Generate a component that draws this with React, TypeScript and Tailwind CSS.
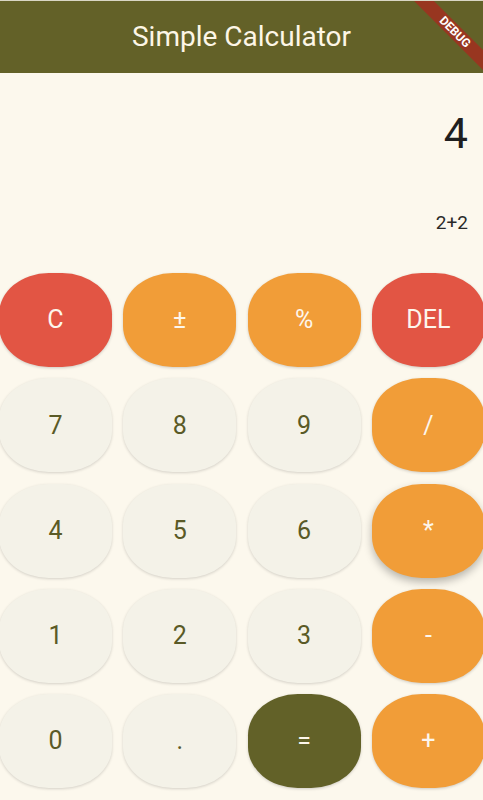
import React from "react";

type Btn = { label: string; kind: "red" | "orange" | "light" | "green"; raised?: boolean };

const rows: Btn[][] = [
  [
    { label: "C", kind: "red" },
    { label: "±", kind: "orange" },
    { label: "%", kind: "orange" },
    { label: "DEL", kind: "red" },
  ],
  [
    { label: "7", kind: "light" },
    { label: "8", kind: "light" },
    { label: "9", kind: "light" },
    { label: "/", kind: "orange" },
  ],
  [
    { label: "4", kind: "light" },
    { label: "5", kind: "light" },
    { label: "6", kind: "light" },
    { label: "*", kind: "orange", raised: true },
  ],
  [
    { label: "1", kind: "light" },
    { label: "2", kind: "light" },
    { label: "3", kind: "light" },
    { label: "-", kind: "orange" },
  ],
  [
    { label: "0", kind: "light" },
    { label: ".", kind: "light" },
    { label: "=", kind: "green" },
    { label: "+", kind: "orange" },
  ],
];

function cls(b: Btn) {
  const base =
    "h-[94px] w-[113px] shrink-0 rounded-[44%] flex items-center justify-center text-[25px] ";
  let c = "";
  if (b.kind === "red") c = "bg-[#e25544] text-[#fdf6ec] shadow-[0_1px_3px_rgba(0,0,0,0.18)]";
  else if (b.kind === "orange") c = "bg-[#f19d38] text-[#fdf6ec] shadow-[0_1px_3px_rgba(0,0,0,0.18)]";
  else if (b.kind === "green") c = "bg-[#626128] text-[#fdf6ec] shadow-[0_1px_3px_rgba(0,0,0,0.18)]";
  else c = "bg-[#f4f2e8] text-[#5a5a26] shadow-[0_1px_3px_rgba(0,0,0,0.16)]";
  if (b.raised) c += " !shadow-[0_4px_8px_rgba(0,0,0,0.28)]";
  return base + c;
}

export default function App() {
  return (
    <div
      className="w-[483px] h-[800px] bg-[#fcf8ed] overflow-hidden flex flex-col"
      style={{ fontFamily: "Roboto, 'Noto Sans', sans-serif" }}
    >
      <div className="relative h-[73px] bg-[#636128] border-t border-[#d9d6c4] flex items-center justify-center overflow-hidden shrink-0">
        <span className="text-[28px] text-[#fdf6e6]">Simple Calculator</span>
        <div className="absolute left-[385px] top-[24px] w-[140px] h-[14px] rotate-45 bg-[#983620] flex items-center justify-center">
          <span className="text-[12px] font-bold text-white leading-none">DEBUG</span>
        </div>
      </div>
      <div className="h-[200px] shrink-0 flex flex-col items-end pr-[15px]">
        <div className="mt-[29px] text-[43px] leading-[62px] text-[#1f1f1f]">4</div>
        <div className="mt-[47px] text-[19px] leading-[24px] text-[#2a2a2a]">2+2</div>
      </div>
      <div className="ml-[-1px] flex flex-col gap-y-[11.3px]">
        {rows.map((r, i) => (
          <div key={i} className="flex gap-x-[11.3px]">
            {r.map((b) => (
              <div key={b.label} className={cls(b)}>
                {b.label}
              </div>
            ))}
          </div>
        ))}
      </div>
    </div>
  );
}
